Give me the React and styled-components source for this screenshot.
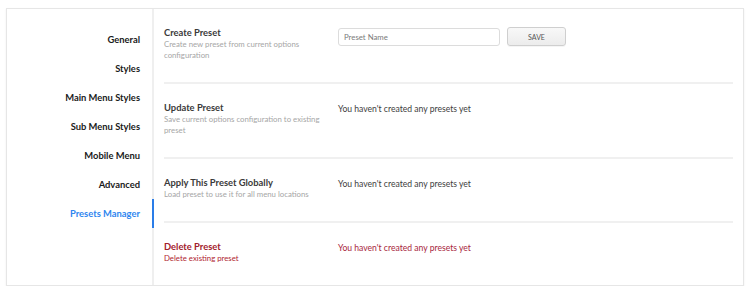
import React from "react";
import styled, { createGlobalStyle } from "styled-components";

const Global = createGlobalStyle`
  html, body { margin: 0; padding: 0; background: #ffffff; }
  body { font-family: Lato, "Open Sans", sans-serif; -webkit-font-smoothing: antialiased; }
  * { box-sizing: border-box; }
`;

const Page = styled.div`
  padding: 8px 6px 0 6px;
`;

const Card = styled.div`
  width: 738px;
  height: 278px;
  background: #fff;
  border: 1px solid #e6e6e6;
  box-shadow: 0 1px 2px rgba(0, 0, 0, 0.07);
  display: grid;
  grid-template-columns: 147px 1fr;
`;

const Sidebar = styled.nav`
  border-right: 2px solid #efefef;
  padding-top: 16px;
  display: flex;
  flex-direction: column;
`;

const NavItem = styled.div`
  height: 29px;
  line-height: 29px;
  text-align: right;
  padding-right: 12px;
  font-size: 9.4px;
  font-weight: 700;
  color: ${(p) => (p.$active ? "#2f86ef" : "#1a1a1a")};
  margin-right: ${(p) => (p.$active ? "-2px" : "0")};
  border-right: ${(p) => (p.$active ? "2px solid #2a7de8" : "none")};
`;

const Content = styled.div`
  padding: 0 10px 0 10px;
  display: flex;
  flex-direction: column;
`;

const Section = styled.section`
  display: grid;
  grid-template-columns: 174px 1fr;
  padding: 18px 0 21px;
  border-bottom: ${(p) => (p.$last ? "none" : "2px solid #f0f0f0")};
`;

const Info = styled.div`
  display: flex;
  flex-direction: column;
`;

const Title = styled.div`
  font-size: 9.4px;
  line-height: 12px;
  font-weight: 700;
  color: ${(p) => (p.$danger ? "#a3202c" : "#3a3a3a")};
`;

const Desc = styled.div`
  font-size: 7.8px;
  line-height: 11px;
  color: ${(p) => (p.$danger ? "#b0242f" : "#a6a6a6")};
  max-width: 160px;
`;

const Control = styled.div`
  display: flex;
  align-items: flex-start;
  gap: 7px;
  padding-top: 1px;
`;

const Note = styled.div`
  font-size: 8.6px;
  line-height: 12px;
  color: ${(p) => (p.$danger ? "#a8263d" : "#3d3d3d")};
`;

const Input = styled.input`
  width: 162px;
  height: 18px;
  border: 1px solid #dcdcdc;
  border-radius: 3px;
  padding: 0 5px;
  font-family: Lato, "Open Sans", sans-serif;
  font-size: 7.8px;
  color: #444;
  outline: none;
  &::placeholder { color: #7b7b7b; }
`;

const Button = styled.button`
  width: 59px;
  height: 19px;
  margin-top: -1px;
  border: 1px solid #cfcfcf;
  border-radius: 3px;
  background: linear-gradient(#f8f8f8, #ececec);
  font-family: Lato, "Open Sans", sans-serif;
  font-size: 7px;
  color: #555;
  padding: 0;
  box-shadow: 0 1px 0 rgba(0, 0, 0, 0.04);
`;

const navItems = [
  "General",
  "Styles",
  "Main Menu Styles",
  "Sub Menu Styles",
  "Mobile Menu",
  "Advanced",
  "Presets Manager",
];

const EMPTY = "You haven't created any presets yet";

export default function App() {
  return (
    <Page>
      <Global />
      <Card>
        <Sidebar>
          {navItems.map((n) => (
            <NavItem key={n} $active={n === "Presets Manager"}>
              {n}
            </NavItem>
          ))}
        </Sidebar>
        <Content>
          <Section>
            <Info>
              <Title>Create Preset</Title>
              <Desc>Create new preset from current options configuration</Desc>
            </Info>
            <Control>
              <Input placeholder="Preset Name" />
              <Button>SAVE</Button>
            </Control>
          </Section>
          <Section>
            <Info>
              <Title>Update Preset</Title>
              <Desc>Save current options configuration to existing preset</Desc>
            </Info>
            <Control>
              <Note>{EMPTY}</Note>
            </Control>
          </Section>
          <Section>
            <Info>
              <Title>Apply This Preset Globally</Title>
              <Desc>Load preset to use it for all menu locations</Desc>
            </Info>
            <Control>
              <Note>{EMPTY}</Note>
            </Control>
          </Section>
          <Section $last>
            <Info>
              <Title $danger>Delete Preset</Title>
              <Desc $danger>Delete existing preset</Desc>
            </Info>
            <Control>
              <Note $danger>{EMPTY}</Note>
            </Control>
          </Section>
        </Content>
      </Card>
    </Page>
  );
}
